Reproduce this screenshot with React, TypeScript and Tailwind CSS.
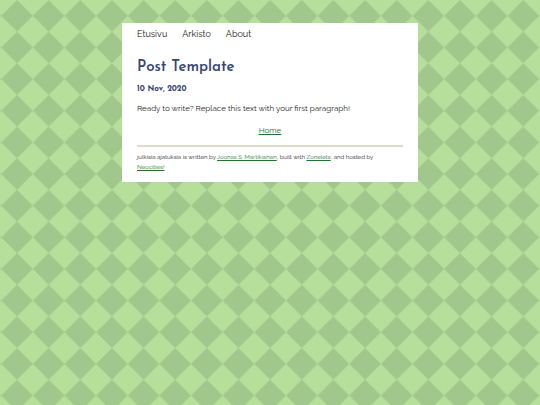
const linkClass = "text-[#23742a] underline";

function Backdrop() {
  return (
    <svg className="fixed inset-0 -z-10 h-full w-full" aria-hidden="true">
      <defs>
        <pattern
          id="diamonds"
          x="1.2"
          width="31.64"
          height="31.64"
          patternUnits="userSpaceOnUse"
        >
          <rect width="32" height="32" fill="#b6df9b" />
          <path d="M15.82 0 31.64 15.82 15.82 31.64 0 15.82Z" fill="#a2c78c" />
        </pattern>
      </defs>
      <rect width="100%" height="100%" fill="url(#diamonds)" />
    </svg>
  );
}

export default function App() {
  return (
    <div className="relative isolate min-h-screen pt-[23px] font-['Raleway','Lato',sans-serif] text-[#1c1c1c]">
      <Backdrop />
      <div className="mx-auto max-w-[296px] bg-white px-[15px] pb-[10px]">
        <nav>
          <ul className="flex gap-[15px] text-[9px] leading-[22px]">
            <li><a href="#etusivu">Etusivu</a></li>
            <li><a href="#arkisto">Arkisto</a></li>
            <li><a href="#about">About</a></li>
          </ul>
        </nav>
        <main>
          <h1 className="mt-[13px] font-['Josefin_Sans','Lato',sans-serif] text-[15px] leading-5 font-semibold text-[#374673]">
            Post Template
          </h1>
          <h4 className="mt-[5px] font-['Josefin_Sans','Lato',sans-serif] text-[8px] leading-3 font-bold text-[#374673]">
            10 Nov, 2020
          </h4>
          <p className="mt-[7px] text-[8px] leading-3">
            Ready to write? Replace this text with your first paragraph!
          </p>
          <nav className="mt-[10px] text-center text-[8px] leading-3">
            <a href="#home" className={linkClass}>Home</a>
          </nav>
        </main>
        <footer className="mt-[9px] border-t-2 border-[#e0d9c9] pt-[5px] text-[6px] leading-[10px]">
          julkisia ajatuksia is written by{" "}
          <a href="#author" className={linkClass}>Joonas S. Martikainen</a>, built with{" "}
          <a href="#zonelets" className={linkClass}>Zonelets</a>, and hosted by
          <br />
          <a href="#neocities" className={linkClass}>Neocities!</a>
        </footer>
      </div>
    </div>
  );
}
